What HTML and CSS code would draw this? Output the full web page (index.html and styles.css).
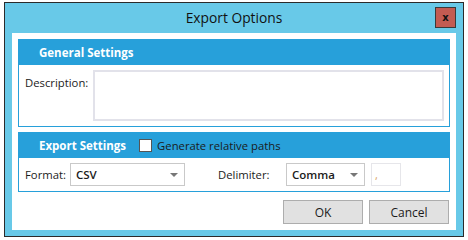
FILE: index.html
```html
<!DOCTYPE html>
<html lang="en">
<head>
  <meta charset="UTF-8">
  <title>Export Options</title>
  <link rel="stylesheet" href="styles.css">
</head>
<body>

  <div class="window">
    <div class="titlebar">
      <span></span>
      <div class="title">Export Options</div>
      <button class="close">x</button>
    </div>

    <div class="panel">
      <div class="group">
        <div class="group-head">General Settings</div>
        <div class="group-body">
          <label class="lbl lbl-desc">Description:</label>
          <div class="textarea"></div>
        </div>
      </div>

      <div class="group">
        <div class="group-head">
          <span>Export Settings</span>
          <span class="check"></span>
          <span class="check-text">Generate relative paths</span>
        </div>
        <div class="group-body row">
          <label class="lbl lbl-format">Format:</label>
          <div class="combo combo-format">CSV<span class="arrow"></span></div>
          <label class="lbl lbl-delim">Delimiter:</label>
          <div class="combo combo-delim">Comma<span class="arrow"></span></div>
          <div class="textbox">,</div>
        </div>
      </div>

      <div class="buttons">
        <button class="btn">OK</button>
        <button class="btn">Cancel</button>
      </div>
    </div>
  </div>

</body>
</html>
```

FILE: styles.css
```css
:root {
  --frame: #68c9e8;
  --blue: #27a0da;
  --text: #1b1b1b;
  --border: #d6d6dc;
}

body {
  margin: 0;
  background: #fff;
  font-family: 'Open Sans', 'Noto Sans', sans-serif;
  color: var(--text);
}

.window {
  margin: 2px 0 0 4px;
  width: 460px;
  height: 235px;
  box-sizing: border-box;
  border: 1px solid #2b2b2b;
  background: var(--frame);
  padding: 0 7px 7px;
  display: flex;
  flex-direction: column;
}

.titlebar {
  height: 30px;
  flex: none;
  display: grid;
  grid-template-columns: 1fr auto 1fr;
  align-items: center;
}

.title {
  font-size: 13.8px;
  color: #111;
  margin-bottom: 1px;
}

.close {
  justify-self: end;
  align-self: start;
  margin-top: 4px;
  width: 21px;
  height: 21px;
  padding: 0;
  border: 1px solid #3a3a3a;
  background: #c35b52;
  color: #111;
  font-family: 'DejaVu Sans', sans-serif;
  font-weight: bold;
  font-size: 10px;
  line-height: 17px;
}

.panel {
  flex: 1;
  background: #fff;
  padding: 6px;
  display: flex;
  flex-direction: column;
  gap: 5px;
}

.group {
  border: 1px solid var(--blue);
}

.group-head {
  background: var(--blue);
  height: 25px;
  padding-left: 20px;
  display: flex;
  align-items: center;
  color: #fff;
  font-weight: bold;
  font-size: 11.5px;
}

.check {
  width: 11px;
  height: 11px;
  border: 1px solid #555;
  background: #fff;
  margin-left: 13px;
}

.check-text {
  font-weight: normal;
  color: var(--text);
  margin-left: 5px;
  font-size: 11.3px;
}

.group-body {
  display: flex;
  padding: 5px 5px 5px 6px;
}

.lbl {
  font-size: 11.3px;
}

.lbl-desc {
  width: 68px;
  padding-top: 5px;
}

.textarea {
  flex: 1;
  height: 47px;
  border: 2px solid #e2e2ea;
}

.row {
  align-items: center;
}

.lbl-format {
  width: 45px;
}

.lbl-delim {
  width: 68px;
  margin-left: 33px;
}

.combo {
  height: 21px;
  box-sizing: content-box;
  border: 1px solid #c9c9c9;
  display: flex;
  align-items: center;
  padding-left: 5px;
  font-size: 11.5px;
  font-weight: 600;
  position: relative;
}

.combo-format {
  width: 108px;
}

.combo-delim {
  width: 72px;
}

.arrow {
  position: absolute;
  right: 6px;
  top: 9px;
  border-left: 4px solid transparent;
  border-right: 4px solid transparent;
  border-top: 4px solid #777;
}

.textbox {
  margin-left: 6px;
  width: 25px;
  height: 21px;
  border: 1px solid #e6e6ea;
  font-size: 11px;
  color: #d9a060;
  padding-left: 3px;
  box-sizing: content-box;
  display: flex;
  align-items: center;
}

.buttons {
  display: flex;
  justify-content: flex-end;
  gap: 6px;
  margin-top: 3px;
  padding-right: 1px;
}

.btn {
  width: 80px;
  height: 24px;
  border: 1px solid #adadad;
  background: #e1e1e1;
  font-family: 'Open Sans', 'Noto Sans', sans-serif;
  font-size: 12px;
  color: var(--text);
  padding: 0;
}
```
